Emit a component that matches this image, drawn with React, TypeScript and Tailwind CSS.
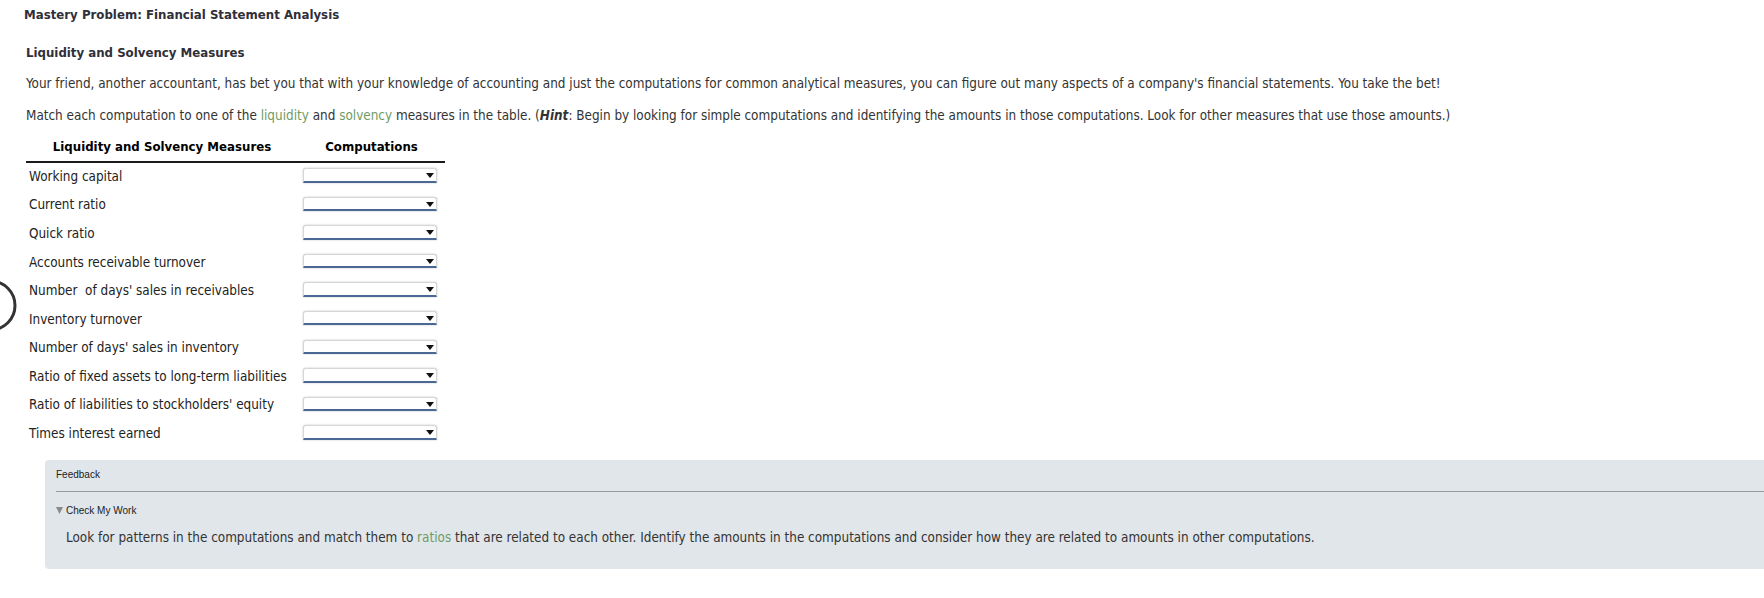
import React from "react";

const measures = [
  "Working capital",
  "Current ratio",
  "Quick ratio",
  "Accounts receivable turnover",
  "Number\u00a0 of days' sales in receivables",
  "Inventory turnover",
  "Number of days' sales in inventory",
  "Ratio of fixed assets to long-term liabilities",
  "Ratio of liabilities to stockholders' equity",
  "Times interest earned",
];

function Dropdown() {
  return (
    <div className="relative mt-[5.5px] ml-[5px] h-[14.5px] w-[134px] rounded-t-[3px] border border-[#d6d6d6] border-b-2 border-b-[#4a6893] bg-white shadow-[0_0_2px_rgba(0,0,0,0.25)]">
      <svg
        className="absolute right-[2px] top-[4px]"
        width="8"
        height="5"
        viewBox="0 0 8 5"
      >
        <polygon points="0,0 8,0 4,5" fill="#111" />
      </svg>
    </div>
  );
}

export default function App() {
  return (
    <div className="relative min-h-[598px] overflow-hidden bg-white font-[DejaVu_Sans_Condensed,DejaVu_Sans,sans-serif] font-stretch-condensed text-[#333]">
      {/* partial ring peeking in at the left edge */}
      <svg className="absolute left-0 top-[280px]" width="20" height="52">
        <circle cx="-9.4" cy="25.5" r="24.4" fill="none" stroke="#333" strokeWidth="3" />
      </svg>

      <div className="pl-[26px] pt-[6px]">
        <h1 className="-ml-[2px] text-[13.1px] font-bold leading-[18px] text-[#2f2f3a]">
          Mastery Problem: Financial Statement Analysis
        </h1>

        <h2 className="mt-[20px] text-[13.1px] font-bold leading-[18px] text-[#2f2f3a]">
          Liquidity and Solvency Measures
        </h2>

        <p className="mt-[13px] text-[13.4px] leading-[18px]">
          Your friend, another accountant, has bet you that with your knowledge of accounting and just the
          computations for common analytical measures, you can figure out many aspects of a company's financial
          statements. You take the bet!
        </p>

        <p className="mt-[14px] text-[13.4px] leading-[18px]">
          Match each computation to one of the <span className="text-[#6f9b66]">liquidity</span> and{" "}
          <span className="text-[#6f9b66]">solvency</span> measures in the table. (
          <b className="italic">Hint</b>: Begin by looking for simple computations and identifying the amounts in
          those computations. Look for other measures that use those amounts.)
        </p>

        {/* measures table */}
        <div className="mt-[12.5px] w-[419px]">
          <div className="flex border-b-2 border-[#1a1a1a] pb-[5px] text-[13.1px] font-bold leading-[18px] text-black">
            <div className="w-[272px] text-center">Liquidity and Solvency Measures</div>
            <div className="flex-1 text-center">Computations</div>
          </div>
          {measures.map((m) => (
            <div key={m} className="flex h-[28.6px]">
              <div className="flex w-[272px] items-center whitespace-pre pl-[3px] text-[13.4px] text-[#222]">
                {m}
              </div>
              <div className="flex-1">
                <Dropdown />
              </div>
            </div>
          ))}
        </div>

        {/* feedback */}
        <div className="-mr-[10px] ml-[19px] mt-[11.5px] rounded-[4px] bg-[#e1e6ea] pl-[11px] pt-[9px] pb-[22px]">
          <div className="font-['Liberation_Sans',Arial,sans-serif] text-[10px] leading-[12px] text-[#222]">
            Feedback
          </div>
          <div className="mt-[10px] border-t border-[#9a9a9a]" />
          <div className="mt-[13px] flex items-center gap-[3px] font-['Liberation_Sans',Arial,sans-serif] text-[10px] leading-[12px] text-[#222]">
            <svg width="7" height="7" viewBox="0 0 7 7">
              <polygon points="0,0 7,0 3.5,7" fill="#8a8a8a" />
            </svg>
            <span>Check My Work</span>
          </div>
          <p className="mt-[12px] pl-[10px] text-[13.4px] leading-[18px]">
            Look for patterns in the computations and match them to{" "}
            <span className="text-[#6f9b66]">ratios</span> that are related to each other. Identify the amounts in
            the computations and consider how they are related to amounts in other computations.
          </p>
        </div>
      </div>
    </div>
  );
}
